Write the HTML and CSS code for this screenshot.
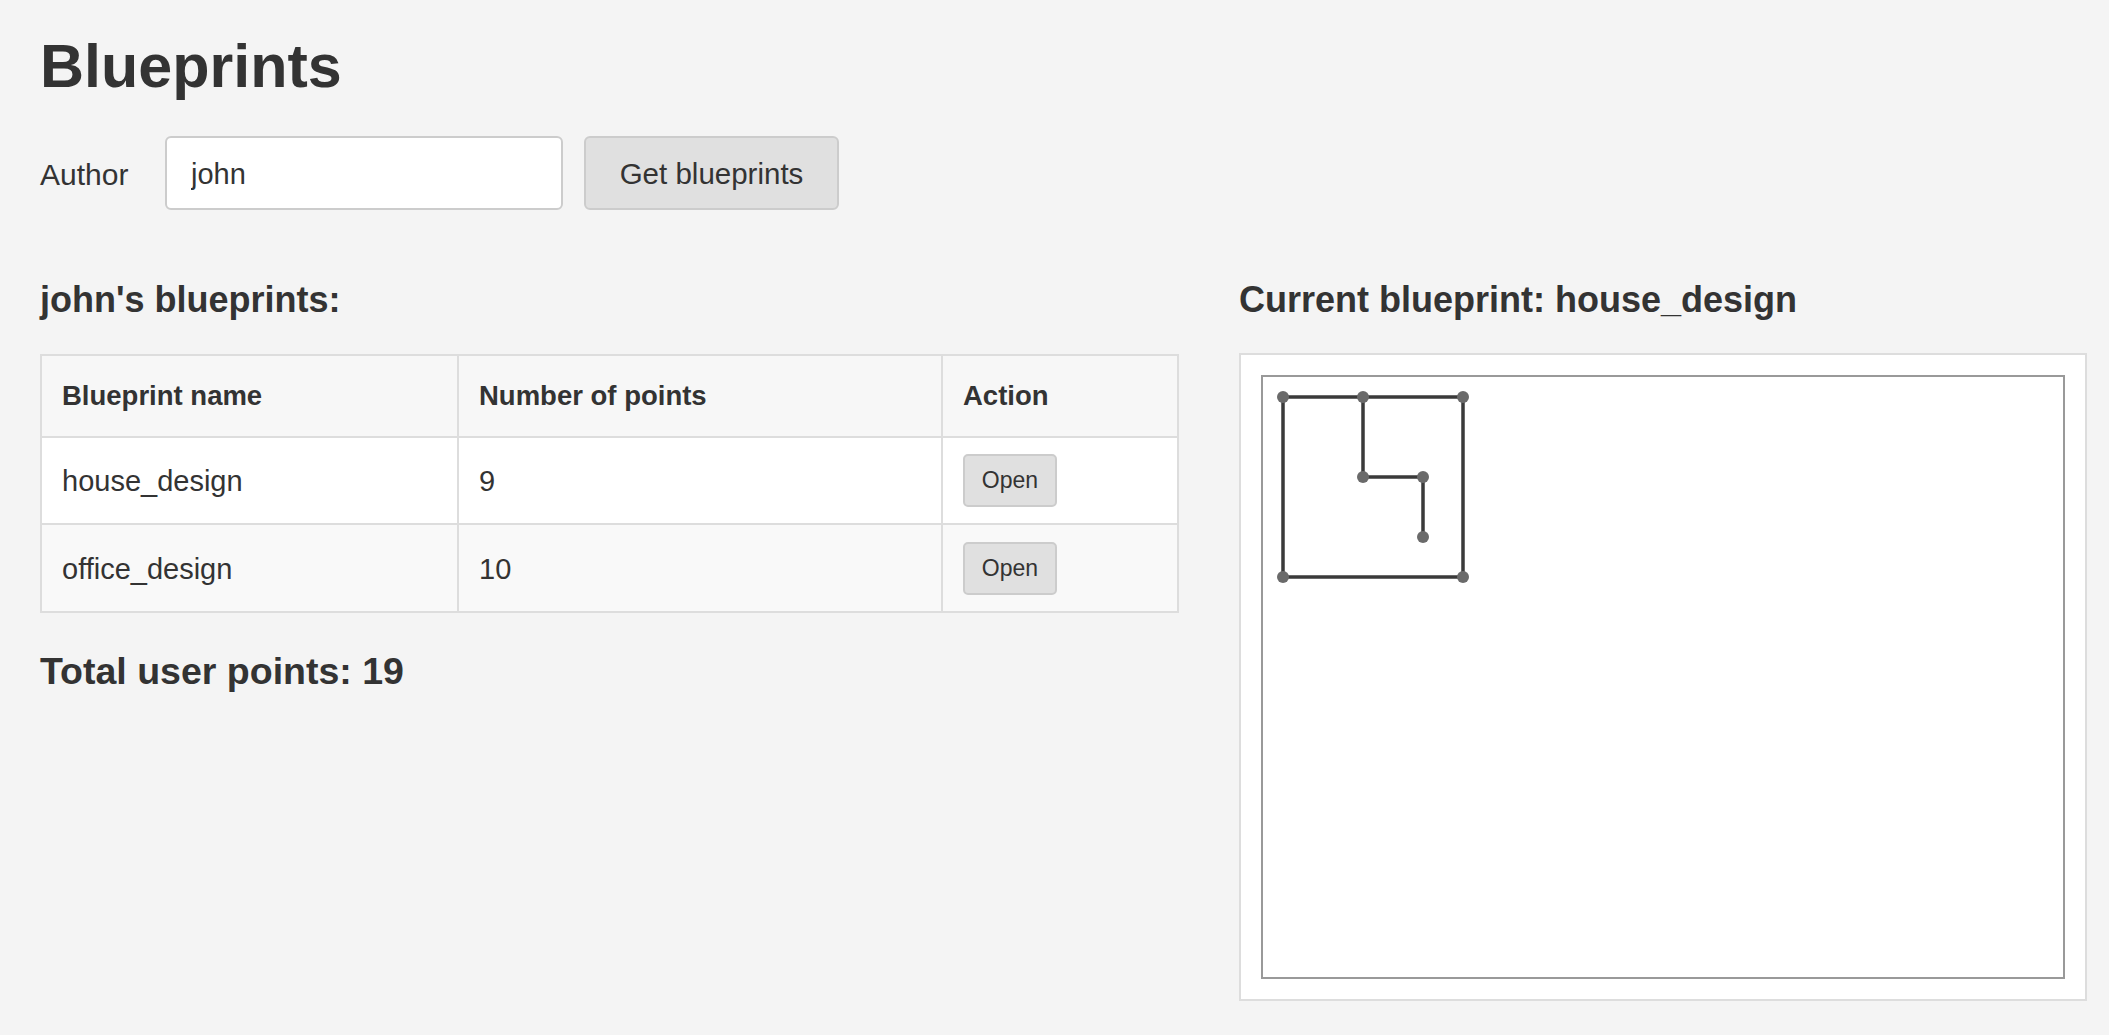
FILE: index.html
```html
<!DOCTYPE html>
<html lang="en">
<head>
<meta charset="utf-8">
<title>Blueprints</title>
<link rel="stylesheet" href="styles.css">
</head>
<body>
<div class="page">
  <h1 class="title">Blueprints</h1>
  <form class="search">
    <label class="search-label" for="author">Author</label>
    <input id="author" class="search-input" type="text" value="john">
    <button class="btn btn-get" type="button">Get blueprints</button>
  </form>
  <div class="columns">
    <section class="col-left">
      <h2 class="section-title">john's blueprints:</h2>
      <table class="bp-table">
        <colgroup>
          <col class="c-name">
          <col class="c-points">
          <col class="c-action">
        </colgroup>
        <thead>
          <tr><th>Blueprint name</th><th>Number of points</th><th>Action</th></tr>
        </thead>
        <tbody>
          <tr class="row-a"><td>house_design</td><td>9</td><td><button class="btn btn-open" type="button">Open</button></td></tr>
          <tr class="row-b"><td>office_design</td><td>10</td><td><button class="btn btn-open" type="button">Open</button></td></tr>
        </tbody>
      </table>
      <h2 class="total">Total user points: 19</h2>
    </section>
    <section class="col-right">
      <h2 class="section-title">Current blueprint: house_design</h2>
      <div class="canvas-panel">
        <svg class="canvas" width="800" height="600" viewBox="0 0 800 600">
          <polyline class="bp-line" points="160,160 160,100 100,100 100,20 20,20 20,200 200,200 200,20 100,20"/>
          <g class="bp-dots">
            <circle cx="160" cy="160" r="6"/>
            <circle cx="160" cy="100" r="6"/>
            <circle cx="100" cy="100" r="6"/>
            <circle cx="100" cy="20" r="6"/>
            <circle cx="20" cy="20" r="6"/>
            <circle cx="20" cy="200" r="6"/>
            <circle cx="200" cy="200" r="6"/>
            <circle cx="200" cy="20" r="6"/>
          </g>
        </svg>
      </div>
    </section>
  </div>
</div>
</body>
</html>
```

FILE: styles.css
```css
* { box-sizing: border-box; }

html, body {
  margin: 0;
  background: #f4f4f4;
}

body {
  font-family: "Liberation Sans", Arial, sans-serif;
  color: #333333;
  font-size: 29px;
}

.page {
  padding: 31px 22px 0 40px;
}

.title {
  margin: 0;
  font-size: 61px;
  line-height: 70px;
  font-weight: 700;
  color: #333333;
}

.search {
  margin-top: 35px;
  display: flex;
  align-items: center;
  gap: 21px;
  height: 74px;
}

.search-label {
  width: 104px;
  font-size: 30px;
  padding-top: 3px;
}

.search-input {
  width: 398px;
  height: 74px;
  padding: 3px 24px 0 24px;
  border: 2px solid #cccccc;
  border-radius: 6px;
  background: #ffffff;
  font-family: inherit;
  font-size: 29px;
  color: #333333;
  outline: none;
}

.btn {
  font-family: inherit;
  color: #333333;
  background: #e0e0e0;
  border: 2px solid #cccccc;
  border-radius: 6px;
  cursor: pointer;
}

.btn-get {
  height: 74px;
  width: 255px;
  padding: 2px 0 0 0;
  font-size: 29.5px;
}

.columns {
  margin-top: 69px;
  display: grid;
  grid-template-columns: 1139px 848px;
  column-gap: 60px;
  align-items: start;
}

.section-title {
  margin: 0;
  font-size: 36px;
  line-height: 41px;
  font-weight: 700;
}

.bp-table {
  margin-top: 34px;
  width: 1137px;
  table-layout: fixed;
  border-collapse: collapse;
  border: 2px solid #dddddd;
}

.c-name { width: 417px; }
.c-points { width: 484px; }
.c-action { width: 236px; }

.bp-table th,
.bp-table td {
  border: 2px solid #dddddd;
  text-align: left;
  vertical-align: middle;
  padding: 0 20px;
}

.bp-table th {
  background: #f7f7f7;
  font-size: 27.5px;
  font-weight: 700;
  height: 82px;
}

.bp-table td {
  font-size: 29px;
  height: 87px;
  padding-top: 2px;
}

.row-a td { background: #ffffff; }
.row-b td { background: #f9f9f9; }

.row-b td { height: 88px; }

.btn-open {
  height: 53px;
  width: 94px;
  padding: 0;
  font-size: 23px;
  border-radius: 5px;
  display: block;
  margin-top: -2px;
}

.total {
  margin: 37px 0 0 0;
  font-size: 37.5px;
  line-height: 43px;
  font-weight: 700;
}

.canvas-panel {
  margin-top: 33px;
  width: 848px;
  padding: 20px;
  background: #ffffff;
  border: 2px solid #dddddd;
}

.canvas {
  display: block;
  width: 804px;
  height: 604px;
  border: 2px solid #999999;
  background: #ffffff;
}

.bp-line {
  fill: none;
  stroke: #3a3a3a;
  stroke-width: 3.5;
  stroke-linejoin: miter;
}

.bp-dots circle {
  fill: #6a6a6a;
}
```
